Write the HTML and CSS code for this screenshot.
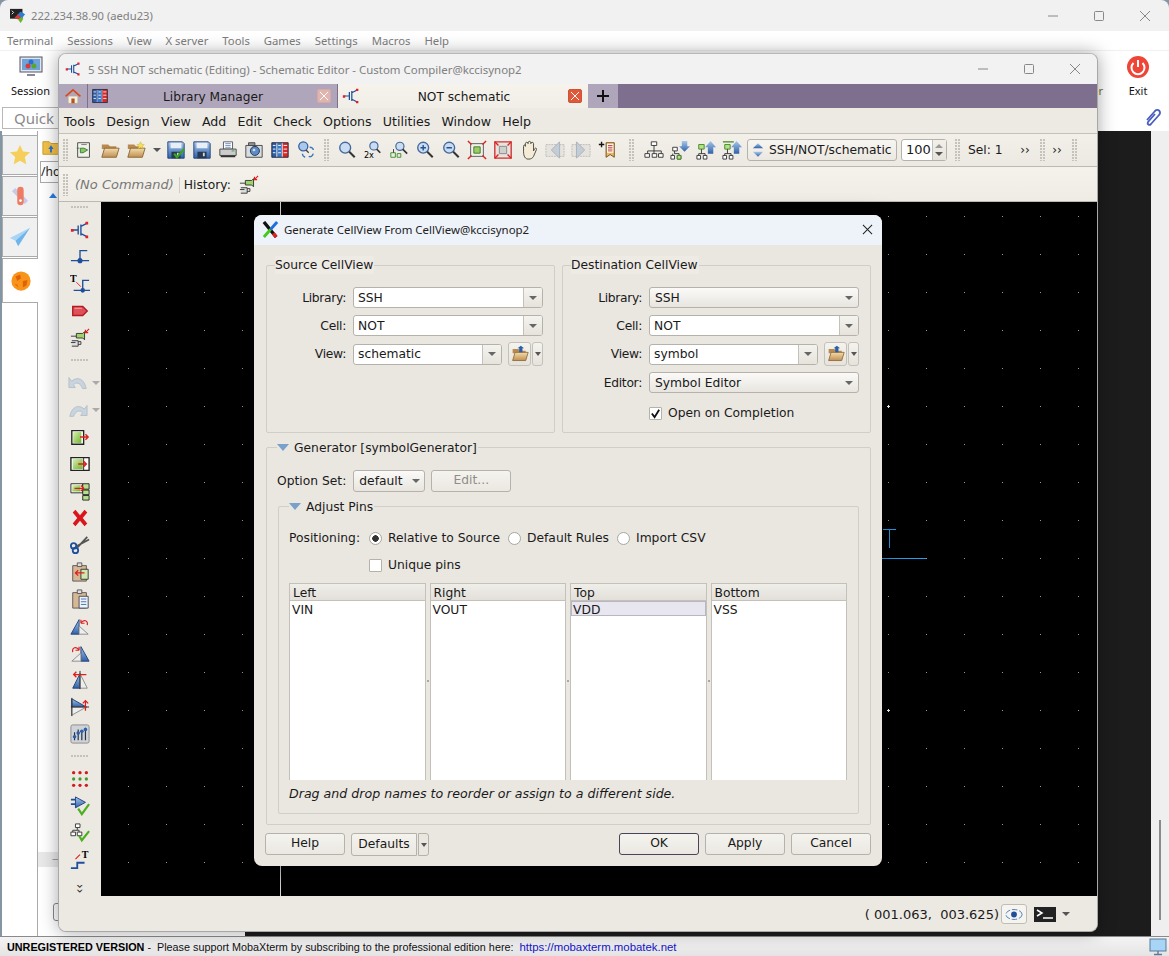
FILE: index.html
```html
<!DOCTYPE html>
<html>
<head>
  <title>MobaXterm - Generate CellView</title>
  <link rel="stylesheet" href="styles.css">
</head>
<body>

<svg class="sprite" xmlns="http://www.w3.org/2000/svg">
  <defs>
    <linearGradient id="gfold" x1="0" y1="0" x2="0" y2="1"><stop offset="0" stop-color="#f3dcae"/><stop offset="1" stop-color="#c08f52"/></linearGradient>
    <linearGradient id="gblue" x1="0" y1="0" x2="0" y2="1"><stop offset="0" stop-color="#a9c8ec"/><stop offset="1" stop-color="#2f62a8"/></linearGradient>
    <linearGradient id="ggrn" x1="0" y1="0" x2="1" y2="1"><stop offset="0" stop-color="#d8efb0"/><stop offset="1" stop-color="#6fb52c"/></linearGradient>
  </defs>
  <symbol id="fet" viewBox="0 0 22 22"><path d="M3 11h6M9 6v10M12 5v12M12 7l6-3M12 15l6 3" fill="none" stroke="#1f4f9c" stroke-width="1.5"/><path d="M1 10h3v3H1zM17 2h3v3h-3zM17 17h3v3h-3z" fill="#e0202a"/></symbol>
  <symbol id="home" viewBox="0 0 22 22"><path d="M5 11h12v9H5z" fill="#f4efe4" stroke="#b9a88f"/><path d="M9 14h4v6H9z" fill="#b4561c"/><path d="M1 11 11 2l10 9-2 1-8-7-8 7z" fill="#d8491c"/></symbol>
  <symbol id="lib" viewBox="0 0 22 22"><path d="M2 3h5v16H2z" fill="#2c5fa8"/><path d="M8 3h5v16H8z" fill="#3c78c4"/><path d="M14 3h6v16h-6z" fill="#d72b2b"/><path d="M3 6h3M3 10h3M3 14h3M9 6h3M9 10h3M9 14h3M15 6h4M15 10h4M15 14h4" stroke="#fff"/><path d="M2 3h18v16H2z" fill="none" stroke="#223"/></symbol>
  <symbol id="newcell" viewBox="0 0 22 22"><path d="M4 3h13v16H4z" fill="#f2f2ea" stroke="#444"/><path d="M3 9h3M15 11l-5 3H7V9h4z" fill="#8ccb4e" stroke="#375"/><path d="M8 5h6" stroke="#777"/></symbol>
  <symbol id="fold" viewBox="0 0 22 22"><path d="M2 5h7l2 2h7v3H2z" fill="#b98a50"/><path d="M2 19 5 9h16l-3 10z" fill="url(#gfold)" stroke="#8a6430"/></symbol>
  <symbol id="foldstar" viewBox="0 0 22 22"><use href="#fold"/><path d="m16 2 1.2 2.6 2.8.3-2 2 .5 2.8-2.5-1.4-2.5 1.4.5-2.8-2-2 2.800-.3z" fill="#f5df60" stroke="#c9a820" stroke-width=".5"/></symbol>
  <symbol id="foldup" viewBox="0 0 22 22"><use href="#fold"/><path d="M10 9V4h-2l4-3 4 3h-2v5z" fill="#2c5fa8"/></symbol>
  <symbol id="save" viewBox="0 0 22 22"><path d="M2 2h16l2 2v16H2z" fill="url(#gblue)" stroke="#1e3d78"/><path d="M5 3h12v6H5z" fill="#e9eff7"/><path d="M6 13h10v7H6z" fill="#28384f"/><path d="M12 14h2v4h-2z" fill="#cfd8e6"/></symbol>
  <symbol id="savechk" viewBox="0 0 22 22"><use href="#save"/><path d="m9 15 3 4 8-9" fill="none" stroke="#3aa51c" stroke-width="2.400"/></symbol>
  <symbol id="print" viewBox="0 0 22 22"><path d="M6 2h10v8H6z" fill="#fff" stroke="#556"/><path d="M8 4h6M8 6h6M8 8h6" stroke="#6b8fc0"/><path d="M2 10h18v7H2z" fill="#ccc" stroke="#444"/><path d="M3 17h16v2H3z" fill="#333"/><path d="M15 12h3" stroke="#3a3"/></symbol>
  <symbol id="cam" viewBox="0 0 22 22"><path d="M2 6h18v13H2z" fill="#d8dde2" stroke="#444"/><path d="M5 3h7v3H5z" fill="#999" stroke="#444"/><circle cx="12" cy="12" r="5" fill="#5c8bc5" stroke="#234"/><circle cx="11" cy="11" r="1.500" fill="#cfe0f5"/></symbol>
  <symbol id="treefind" viewBox="0 0 22 22"><circle cx="8" cy="7" r="5" fill="#a9c8ec" stroke="#34619f" stroke-width="1.400"/><path d="m11 11 3 3" stroke="#444" stroke-width="1.500"/><path d="M15 8c3 0 4 2 4 3M19 15c-1 3-3 4-5 3M7 15c0 2 1 3 3 4" fill="none" stroke="#3e78bd" stroke-width="1.600"/></symbol>
  <symbol id="mag" viewBox="0 0 22 22"><circle cx="9" cy="8.500" r="6" fill="#c9dcf2" stroke="#45699b" stroke-width="1.500"/><path d="m13.500 13 6 6" stroke="#333" stroke-width="2.200"/></symbol>
  <symbol id="magsm" viewBox="0 0 22 22"><circle cx="12" cy="6.500" r="4.500" fill="#c9dcf2" stroke="#45699b" stroke-width="1.300"/><path d="m15 10 4 4" stroke="#333" stroke-width="1.800"/></symbol>
  <symbol id="magnet" viewBox="0 0 22 22"><circle cx="12" cy="7" r="4.500" fill="#c9dcf2" stroke="#45699b" stroke-width="1.300"/><path d="m15 10 5 5" stroke="#333" stroke-width="1.800"/><path d="M2 14h5v5H2zM9 15h4v4H9z" fill="none" stroke="#3a8a2a"/><path d="M5 10v4" stroke="#333"/></symbol>
  <symbol id="magp" viewBox="0 0 22 22"><use href="#mag"/><path d="M6 8.500h6M9 5.500v6" stroke="#23508f" stroke-width="1.500"/></symbol>
  <symbol id="magm" viewBox="0 0 22 22"><use href="#mag"/><path d="M6 8.500h6" stroke="#23508f" stroke-width="1.500"/></symbol>
  <symbol id="fit" viewBox="0 0 22 22"><path d="M4 4h14v14H4z" fill="#f3f0ea" stroke="#555"/><path d="M7.500 7.500h7v7h-7z" fill="#9ccc68" stroke="#3b7a26"/><path d="M1 1l4 4M21 1l-4 4M1 21l4-4M21 21l-4-4" stroke="#e01e1e" stroke-width="1.500"/></symbol>
  <symbol id="fit2" viewBox="0 0 22 22"><path d="M2 2h18v18H2z" fill="#e6e3dd" stroke="#d03030" stroke-width="1.500"/><path d="M7 7h8v8H7z" fill="#cfcfcf" stroke="#888"/><path d="M2 2l4 4M20 2l-4 4M2 20l4-4M20 20l-4-4" stroke="#e01e1e" stroke-width="1.500"/></symbol>
  <symbol id="hand" viewBox="0 0 22 22"><path d="M5 13V7c0-2 2-2 2 0V4c0-2 3-2 3 0v-1c0-2 3-2 3 0v1c0-2 3-2 3 0v8l1-2c1-2 3-1 2 1l-3 7c-1 2-3 3-5 3H10c-3 0-5-3-5-8z" fill="#f3ead8" stroke="#443"/></symbol>
  <symbol id="prev" viewBox="0 0 22 22"><path d="M1 5h20v13H1z" fill="#e6e3dd" stroke="#bbb" stroke-dasharray="2 1"/><path d="M16 2v18L7 11z" fill="#c3cdd8" stroke="#a8b0b8"/></symbol>
  <symbol id="next" viewBox="0 0 22 22"><path d="M1 5h20v13H1z" fill="#e6e3dd" stroke="#bbb" stroke-dasharray="2 1"/><path d="M6 2v18l9-9z" fill="#c3cdd8" stroke="#a8b0b8"/></symbol>
  <symbol id="mark" viewBox="0 0 22 22"><path d="M10 3h9v16l-4.500-3-4.500 3z" fill="#f0b85a" stroke="#6a4a1a"/><path d="M11 4h7v10h-7z" fill="#fff"/><path d="M12 6h5M12 8h5M12 10h5M12 12h5" stroke="#c03030"/><path d="M2 5h6M5 2v6" stroke="#111" stroke-width="1.500"/></symbol>
  <symbol id="tree" viewBox="0 0 22 22"><path d="M8 2h6v4H8zM1 15h5v4H1zM9 15h5v4H9zM16 15h5v4h-5z" fill="#fff" stroke="#333"/><path d="M11 6v4M4 15v-3h15v3M11 10v5" fill="none" stroke="#333"/></symbol>
  <symbol id="treedn" viewBox="0 0 22 22"><path d="M3 8h5v4H3zM1 17h4v4H1zM8 17h4v4H8z" fill="#fff" stroke="#333"/><path d="M5 12v3h5v2M3 15v2" fill="none" stroke="#333"/><path d="M8 17h4v4H8z" fill="#b7e08a" stroke="#3f8a20"/><path d="M13 1h6v6h3l-6 6-6-6h3z" fill="url(#gblue)"/></symbol>
  <symbol id="treeup" viewBox="0 0 22 22"><path d="M3 5h6v5H3z" fill="#b7e08a" stroke="#3f8a20"/><path d="M1 17h4v4H1zM8 17h4v4H8z" fill="#fff" stroke="#333"/><path d="M6 10v5M3 15h7v2M3 15v2" fill="none" stroke="#333"/><path d="M16 1l6 7h-3v7h-6V8h-3z" fill="url(#gblue)"/></symbol>
  <symbol id="treetop" viewBox="0 0 22 22"><path d="M1 2h12" stroke="#3f8a20" stroke-width="1.500"/><use href="#treeup"/></symbol>
  <symbol id="plug" viewBox="0 0 22 22"><path d="M7 6h7l2-2v9l-2-2H7z" fill="#9fd46a" stroke="#333"/><path d="M2 14h7v6H2" fill="#ddd" stroke="#333"/><path d="M9 15l3 0v3H9M1 9h6M6 16h-5" fill="none" stroke="#333"/><path d="M21 1l-4 4M17 2v3h3" fill="none" stroke="#e01e1e" stroke-width="1.300"/></symbol>
  <symbol id="wire" viewBox="0 0 22 22"><path d="M1 15h20M11 15V4h8" fill="none" stroke="#1f4f9c" stroke-width="1.500"/><circle cx="11" cy="15" r="2.800" fill="#1f4f9c"/></symbol>
  <symbol id="wirearm" viewBox="0 0 22 22"><path d="M4 18h18M14 18V7h7" fill="none" stroke="#1f4f9c" stroke-width="1.500"/><circle cx="14" cy="18" r="2.500" fill="#1f4f9c"/><path d="m7 9 5 5" stroke="#e01e1e"/></symbol>
  <symbol id="pin" viewBox="0 0 22 22"><path d="M3 6h11l5 5-5 5H3z" fill="#e0505a" stroke="#b01a20" stroke-width="1.500"/><path d="M5 8h8" stroke="#f3b0b0"/></symbol>
  <symbol id="undo" viewBox="0 0 22 22"><path d="M1 5v11h7l-2-3c3-3 7-3 10 4h4c-2-10-9-14-16-8z" fill="#c8d4de" stroke="#b5bec7"/></symbol>
  <symbol id="redo" viewBox="0 0 22 22"><path d="M21 6v11h-7l2-3c-3-3-7-3-10 4H2c2-10 9-14 16-8z" fill="#c8d4de" stroke="#b5bec7"/></symbol>
  <symbol id="move" viewBox="0 0 22 22"><path d="M2 4h13v15H2z" fill="#fff" stroke="#222" stroke-width="1.500"/><path d="M3.500 5.500h9v12h-9z" fill="url(#ggrn)"/><path d="M11 11h9M17 8l3 3-3 3" fill="none" stroke="#e01e1e" stroke-width="1.500"/></symbol>
  <symbol id="stretch" viewBox="0 0 22 22"><path d="M1 4h20v14H1z" fill="#fff" stroke="#222" stroke-width="1.500"/><path d="M3 5.500h11v11H3z" fill="url(#ggrn)"/><path d="M15 4v14" stroke="#222"/><path d="M9 11h9M15 8l3 3-3 3" fill="none" stroke="#e01e1e" stroke-width="1.500"/></symbol>
  <symbol id="copy" viewBox="0 0 22 22"><path d="M1 3h13v10H1z" fill="#fff" stroke="#222"/><path d="M2.500 4.500h9v7h-9z" fill="url(#ggrn)"/><path d="M14 3h7v6h-7zM14 10h7v5h-7zM14 16h7v5h-7z" fill="#b7e08a" stroke="#222"/><path d="M5 8h10M12 5l3 3-3 3" fill="none" stroke="#e01e1e" stroke-width="1.400"/></symbol>
  <symbol id="del" viewBox="0 0 22 22"><path d="M3 5l3-3 5 6 5-6 3 3-5 6 5 6-3 3-5-6-5 6-3-3 5-6z" fill="#d9161c"/></symbol>
  <symbol id="sciss" viewBox="0 0 22 22"><path d="M19 2 8 14M21 5 6 13" stroke="#555" stroke-width="2"/><circle cx="6" cy="17" r="3" fill="none" stroke="#1f4f9c" stroke-width="2"/><circle cx="4" cy="12" r="3" fill="none" stroke="#1f4f9c" stroke-width="2"/></symbol>
  <symbol id="pastem" viewBox="0 0 22 22"><path d="M3 4h15v17H3z" fill="#d8b894" stroke="#555"/><path d="M8 1h5v4H8z" fill="#ddd" stroke="#555"/><path d="M12 8h8v11h-8z" fill="#cfe8b0" stroke="#333"/><path d="M6 12h10M9 9l-3 3 3 3" fill="none" stroke="#e01e1e" stroke-width="1.400"/></symbol>
  <symbol id="paste" viewBox="0 0 22 22"><path d="M3 4h15v17H3z" fill="#d8b894" stroke="#555"/><path d="M8 1h5v4H8z" fill="#ddd" stroke="#555"/><path d="M10 8h10v13H10z" fill="#eef3fa" stroke="#445"/><path d="M12 11h6M12 14h6M12 17h6" stroke="#3e6fb5"/></symbol>
  <symbol id="rotl" viewBox="0 0 22 22"><path d="M10 4v16H1z" fill="url(#gblue)" stroke="#1e3d78"/><path d="M10 11l10 9H10z" fill="#eee" stroke="#888"/><path d="M12 8c3-5 8-3 7 2M12 8V4M12 8h4" fill="none" stroke="#d92020" stroke-width="1.300"/></symbol>
  <symbol id="rotr" viewBox="0 0 22 22"><path d="M12 4v16h9z" fill="url(#gblue)" stroke="#1e3d78"/><path d="M12 11 2 20h10z" fill="#eee" stroke="#888"/><path d="M10 8C7 3 2 5 3 10M10 8V4M10 8H6" fill="none" stroke="#d92020" stroke-width="1.300"/></symbol>
  <symbol id="flipv" viewBox="0 0 22 22"><path d="M11 4v16H3z" fill="url(#gblue)" stroke="#1e3d78"/><path d="M11 4v16h8z" fill="#eee" stroke="#888"/><path d="M11 1v20" stroke="#222"/><path d="M4 5h14M7 2 4 5l3 3" fill="none" stroke="#e01e1e" stroke-width="1.400"/></symbol>
  <symbol id="fliph" viewBox="0 0 22 22"><path d="M2 2v9h16z" fill="url(#gblue)" stroke="#1e3d78"/><path d="M2 20v-9h16z" fill="#eee" stroke="#888"/><path d="M1 11h20M2 1v20" stroke="#222"/><path d="M17 4v11M14 7l3-3 3 3" fill="none" stroke="#e01e1e" stroke-width="1.400"/></symbol>
  <symbol id="mixer" viewBox="0 0 22 22"><rect x="1" y="1" width="20" height="20" rx="2" fill="#cfd3d8" stroke="#888"/><path d="M5 18V9M9 18V6M13 18V9M17 18V4" stroke="#234" stroke-width="1.300"/><circle cx="5" cy="14" r="2" fill="#2c5fa8"/><circle cx="9" cy="10" r="2" fill="#2c5fa8"/><circle cx="13" cy="8" r="2" fill="#2c5fa8"/><circle cx="17" cy="6" r="2" fill="#2c5fa8"/></symbol>
  <symbol id="dots" viewBox="0 0 22 22"><g fill="#d01c1c"><circle cx="4" cy="4" r="1.800"/><circle cx="18" cy="4" r="1.800"/><circle cx="4" cy="18" r="1.800"/><circle cx="11" cy="18" r="1.800"/><circle cx="18" cy="18" r="1.800"/><circle cx="11" cy="4" r="1.800"/></g><g fill="#4c9a2a"><circle cx="4" cy="11" r="1.800"/><circle cx="11" cy="11" r="1.800"/><circle cx="18" cy="11" r="1.800"/></g></symbol>
  <symbol id="plugchk" viewBox="0 0 22 22"><path d="M1 4h5M1 9h5" stroke="#1f4f9c" stroke-width="2"/><path d="M6 1v12l11-6z" fill="url(#gblue)" stroke="#1e3d78"/><path d="m9 14 4 6 8-11" fill="none" stroke="#4cb020" stroke-width="2.400"/></symbol>
  <symbol id="treechk" viewBox="0 0 22 22"><path d="M6 1h5v4H6zM1 10h5v4H1zM8 10h5v4H8z" fill="#fff" stroke="#333"/><path d="M8 5v3H3v2M8 8h2v2" fill="none" stroke="#333"/><path d="m10 14 3 5 8-10" fill="none" stroke="#4cb020" stroke-width="2.400"/></symbol>
  <symbol id="stairline" viewBox="0 0 22 22"><path d="M1 20h7v-6h8" fill="none" stroke="#1f4f9c" stroke-width="2"/><path d="M6 10l5-5" stroke="#e01e1e" stroke-width="1.300"/></symbol>
</svg>

<div class="moba">
  <div class="moba-title">
    <svg class="moba-logo" viewBox="0 0 18 18"><rect x="0" y="1" width="14" height="11" fill="#222"/><path d="M2 3l2 2-2 2" stroke="#fff" fill="none"/><path d="M8 8l4-4 5 3-4 5z" fill="#2c7dd0"/><path d="M5 11l4-4 3 3-3 3z" fill="#d73a3a"/><path d="M9 13l4-3 2 2-3 5z" fill="#6ab52c"/></svg>
    <span class="moba-title-text">222.234.38.90 (aedu23)</span>
    <div class="win-btns moba-btns">
      <svg viewBox="0 0 12 12"><path d="M1 6h10" stroke="#888"/></svg>
      <svg viewBox="0 0 12 12"><rect x="1.500" y="1.500" width="9" height="9" rx="1" fill="none" stroke="#888"/></svg>
      <svg viewBox="0 0 12 12"><path d="M1 1l10 10M11 1 1 11" stroke="#888"/></svg>
    </div>
  </div>
  <div class="moba-menu">
    <span>Terminal</span><span>Sessions</span><span>View</span><span>X server</span><span>Tools</span><span>Games</span><span>Settings</span><span>Macros</span><span>Help</span>
  </div>
  <div class="ribbon">
    <div class="rib-item">
      <svg class="rib-icon" viewBox="0 0 24 24"><rect x="1" y="2" width="22" height="15" fill="#dfe8f2" stroke="#556"/><rect x="3" y="4" width="18" height="11" fill="#6fa3d8"/><path d="M8 19h8v2H8z" fill="#889"/><circle cx="12" cy="7" r="2.500" fill="#2c6fd0"/><circle cx="9" cy="11" r="2.500" fill="#d73a3a"/><circle cx="15" cy="11" r="2.500" fill="#5aa52c"/></svg>
      <span>Session</span>
    </div>
    <div class="rib-right">
      <span class="rib-hidden">X server</span>
      <div class="rib-item">
        <svg class="rib-icon" viewBox="0 0 24 24"><circle cx="12" cy="12" r="11" fill="#ef4436"/><path d="M7.500 8a6.500 6.500 0 1 0 9 0M12 5v7" fill="none" stroke="#fff" stroke-width="2"/></svg>
        <span>Exit</span>
      </div>
    </div>
  </div>
  <div class="quick">
    <div class="quick-input">Quick</div>
    <svg class="clip" viewBox="0 0 20 20"><path d="M4 12 12 3c3-3 7 1 4 4l-8 9c-2 2-4 0-3-2l7-8" fill="none" stroke="#4a5ec0" stroke-width="1.800"/></svg>
  </div>
  <div class="moba-main">
    <div class="side-tabs">
      <div class="side-tab"><svg viewBox="0 0 24 24"><path d="m12 1 3.300 7.200 7.700.9-5.700 5.200 1.500 7.700L12 18.200 5.200 22l1.500-7.700L1 9.100l7.700-.9z" fill="#f6cf5a"/></svg></div>
      <div class="side-tab"><svg viewBox="0 0 24 24"><path d="M5 5l14 14" stroke="#c7c9e8" stroke-width="5"/><rect x="9" y="2" width="7" height="20" rx="3.500" fill="#ee7b63"/><circle cx="12.500" cy="17" r="1.500" fill="#fff"/></svg></div>
      <div class="side-tab"><svg viewBox="0 0 24 24"><path d="M23 2 1 13l6 3z" fill="#a8d4f5"/><path d="M23 2 7 16l3 6z" fill="#6fb4ea"/></svg></div>
      <div class="side-tab side-tab-on"><svg viewBox="0 0 24 24"><circle cx="12" cy="12" r="10.500" fill="#f8941a"/><path d="M6 7l5-2 1 4-4 3zM14 12l5-1-1 6-4 2zM5 15l3 1 1 3z" fill="#e0620a"/></svg></div>
    </div>
    <div class="side-panel">
      <svg class="side-folder" viewBox="0 0 20 20"><path d="M1 3h7l2 2h9v12H1z" fill="#f2c14a" stroke="#c99a20"/><path d="M10 7 7 11h2v4h2v-4h2z" fill="#2c6fd0"/></svg>
      <div class="side-path">/hom</div>
      <div class="side-up"></div>
      <div class="side-row"><span>&mdash;</span></div>
      <div class="side-box"></div>
    </div>
    <div class="terminal"></div>
    <div class="scrollbar"><div class="thumb"></div></div>
  </div>
  <div class="status">
    <b>UNREGISTERED VERSION</b><span class="status-msg">-&nbsp; Please support MobaXterm by subscribing to the professional edition here:</span><span class="status-link">https://mobaxterm.mobatek.net</span>
    <svg class="status-mon" viewBox="0 0 18 18"><rect x="1" y="1" width="16" height="12" fill="#a8d4f5" stroke="#5a7a9a"/><path d="M9 13v3M5 16.500h8" stroke="#5a7a9a" stroke-width="1.400"/></svg>
  </div>
</div>

<div class="editor">
  <div class="ed-title">
    <svg class="ic14"><use href="#fet"/></svg>
    <span class="ed-title-text">5 SSH NOT schematic (Editing) - Schematic Editor - Custom Compiler@kccisynop2</span>
    <div class="win-btns ed-btns">
      <svg viewBox="0 0 12 12"><path d="M1 6h10" stroke="#888"/></svg>
      <svg viewBox="0 0 12 12"><rect x="1.500" y="1.500" width="9" height="9" rx="1" fill="none" stroke="#888"/></svg>
      <svg viewBox="0 0 12 12"><path d="M1 1l10 10M11 1 1 11" stroke="#888"/></svg>
    </div>
  </div>
  <div class="tabs">
    <div class="tab tab-home"><svg class="ic16"><use href="#home"/></svg></div>
    <div class="tab tab-lib">
      <svg class="ic16"><use href="#lib"/></svg>
      <span class="tab-name">Library Manager</span>
      <span class="tab-x tab-x-off"></span>
    </div>
    <div class="tab tab-on">
      <svg class="ic16"><use href="#fet"/></svg>
      <span class="tab-name">NOT schematic</span>
      <span class="tab-x"></span>
    </div>
    <div class="tab tab-plus"><svg viewBox="0 0 12 12"><path d="M6 0v12M0 6h12" stroke="#111" stroke-width="2"/></svg></div>
  </div>
  <div class="ed-menu">
    <span>Tools</span><span>Design</span><span>View</span><span>Add</span><span>Edit</span><span>Check</span><span>Options</span><span>Utilities</span><span>Window</span><span>Help</span>
  </div>
  <div class="toolbar">
    <i class="grip grip-a"></i>
    <span class="tb"><svg class="ic"><use href="#newcell"/></svg></span>
    <span class="tb"><svg class="ic"><use href="#fold"/></svg></span>
    <span class="tb"><svg class="ic"><use href="#foldstar"/></svg></span>
    <span class="tb-drop"></span>
    <span class="tb"><svg class="ic"><use href="#savechk"/></svg></span>
    <span class="tb"><svg class="ic"><use href="#save"/></svg></span>
    <span class="tb"><svg class="ic"><use href="#print"/></svg></span>
    <span class="tb"><svg class="ic"><use href="#cam"/></svg></span>
    <span class="tb"><svg class="ic"><use href="#lib"/></svg></span>
    <span class="tb"><svg class="ic"><use href="#treefind"/></svg></span>
    <i class="grip grip-b"></i>
    <span class="tb"><svg class="ic"><use href="#mag"/></svg></span>
    <span class="tb"><svg class="ic" viewBox="0 0 22 22"><use href="#magsm"/><text x="1" y="20" class="ic-text">2x</text></svg></span>
    <span class="tb"><svg class="ic"><use href="#magnet"/></svg></span>
    <span class="tb"><svg class="ic"><use href="#magp"/></svg></span>
    <span class="tb"><svg class="ic"><use href="#magm"/></svg></span>
    <span class="tb"><svg class="ic"><use href="#fit"/></svg></span>
    <span class="tb"><svg class="ic"><use href="#fit2"/></svg></span>
    <span class="tb"><svg class="ic"><use href="#hand"/></svg></span>
    <span class="tb"><svg class="ic"><use href="#prev"/></svg></span>
    <span class="tb"><svg class="ic"><use href="#next"/></svg></span>
    <span class="tb"><svg class="ic"><use href="#mark"/></svg></span>
    <i class="grip grip-c"></i>
    <span class="tb"><svg class="ic"><use href="#tree"/></svg></span>
    <span class="tb"><svg class="ic"><use href="#treedn"/></svg></span>
    <span class="tb"><svg class="ic"><use href="#treeup"/></svg></span>
    <span class="tb"><svg class="ic"><use href="#treetop"/></svg></span>
    <div class="cv-combo">
      <svg viewBox="0 0 14 18"><path d="M7 1l6 6H1z" fill="url(#gblue)"/><path d="M7 17l6-6H1z" fill="url(#gblue)"/></svg>
      <span>SSH/NOT/schematic</span>
    </div>
    <div class="spin"><span class="spin-val">100</span><span class="spin-arrows"></span></div>
    <i class="grip grip-d"></i>
    <span class="sel">Sel: 1</span>
    <span class="more more-a">&rsaquo;&rsaquo;</span>
    <i class="grip grip-e"></i>
    <span class="more more-b">&rsaquo;&rsaquo;</span>
    <i class="grip grip-e"></i>
  </div>
  <div class="cmdbar">
    <i class="grip grip-a"></i>
    <span class="no-cmd">(No Command)</span>
    <span class="hist">History:</span>
    <svg class="ic hist-ic"><use href="#plug"/></svg>
  </div>
  <div class="work">
    <div class="lefttools">
      <i class="hgrip"></i>
      <span class="lt"><svg class="ic"><use href="#fet"/></svg></span>
      <span class="lt"><svg class="ic"><use href="#wire"/></svg></span>
      <span class="lt"><svg class="ic" viewBox="0 0 22 22"><use href="#wirearm"/><text x="0" y="9" class="ic-t">T</text></svg></span>
      <span class="lt"><svg class="ic"><use href="#pin"/></svg></span>
      <span class="lt"><svg class="ic"><use href="#plug"/></svg></span>
      <i class="hgrip hgrip-mid"></i>
      <span class="lt lt-drop"><svg class="ic"><use href="#undo"/></svg><em></em></span>
      <span class="lt lt-drop"><svg class="ic"><use href="#redo"/></svg><em></em></span>
      <span class="lt"><svg class="ic"><use href="#move"/></svg></span>
      <span class="lt"><svg class="ic"><use href="#stretch"/></svg></span>
      <span class="lt"><svg class="ic"><use href="#copy"/></svg></span>
      <span class="lt"><svg class="ic"><use href="#del"/></svg></span>
      <span class="lt"><svg class="ic"><use href="#sciss"/></svg></span>
      <span class="lt"><svg class="ic"><use href="#pastem"/></svg></span>
      <span class="lt"><svg class="ic"><use href="#paste"/></svg></span>
      <span class="lt"><svg class="ic"><use href="#rotl"/></svg></span>
      <span class="lt"><svg class="ic"><use href="#rotr"/></svg></span>
      <span class="lt"><svg class="ic"><use href="#flipv"/></svg></span>
      <span class="lt"><svg class="ic"><use href="#fliph"/></svg></span>
      <span class="lt"><svg class="ic"><use href="#mixer"/></svg></span>
      <i class="hgrip hgrip-mid"></i>
      <span class="lt"><svg class="ic"><use href="#dots"/></svg></span>
      <span class="lt"><svg class="ic"><use href="#plugchk"/></svg></span>
      <span class="lt"><svg class="ic"><use href="#treechk"/></svg></span>
      <span class="lt"><svg class="ic" viewBox="0 0 22 22"><use href="#stairline"/><text x="13" y="9" class="ic-t">T</text></svg></span>
      <span class="lt lt-more">&rsaquo;&rsaquo;</span>
    </div>
    <div class="canvas">
      <div class="axis"></div>
      <div class="cross cross-a"></div>
      <div class="cross cross-b"></div>
      <div class="pin-t"></div>
      <div class="pin-v"></div>
      <div class="pin-h"></div>
    </div>
  </div>
  <div class="ed-status">
    <span class="coords">( 001.063,&nbsp; 003.625)</span>
    <span class="eye"><svg viewBox="0 0 20 14"><ellipse cx="10" cy="7" rx="9" ry="5.500" fill="none" stroke="#3e78bd" stroke-dasharray="6 2"/><circle cx="10" cy="7" r="3.200" fill="#1f4f9c"/></svg></span>
    <svg class="term-ic" viewBox="0 0 22 15"><rect width="22" height="15" fill="#222"/><path d="M3 3l5 3-5 3" fill="none" stroke="#fff" stroke-width="1.500"/><path d="M9 11h10" stroke="#fff" stroke-width="1.500"/></svg>
    <span class="st-drop"></span>
  </div>
</div>

<div class="dialog">
  <div class="dlg-title">
    <svg class="x-logo" viewBox="0 0 18 18"><path d="M2 1l13 16" stroke="#111" stroke-width="3.500"/><path d="M16 1 9 9" stroke="#1c6fe0" stroke-width="3"/><path d="M2 17l7-8" stroke="#43c81e" stroke-width="3"/><path d="M12 13l3 4" stroke="#e02020" stroke-width="3.500"/></svg>
    <span class="dlg-title-text">Generate CellView From CellView@kccisynop2</span>
    <svg class="dlg-close" viewBox="0 0 12 12"><path d="M1 1l10 10M11 1 1 11" stroke="#222" stroke-width="1.100"/></svg>
  </div>
  <div class="dlg-body">
    <div class="cv-row">
      <div class="group cv-source">
        <div class="legend">Source CellView</div>
        <div class="form">
          <label>Library:</label><div class="combo"><span class="cb-text">SSH</span><span class="cb-arrow"></span></div>
          <label>Cell:</label><div class="combo"><span class="cb-text">NOT</span><span class="cb-arrow"></span></div>
          <label>View:</label>
          <div class="combo-pair">
            <div class="combo"><span class="cb-text">schematic</span><span class="cb-arrow"></span></div>
            <span class="fold-btn"><svg class="ic18"><use href="#foldup"/></svg></span><span class="fold-drop"></span>
          </div>
        </div>
      </div>
      <div class="group cv-dest">
        <div class="legend">Destination CellView</div>
        <div class="form">
          <label>Library:</label><div class="combo combo-ro"><span class="cb-text">SSH</span><span class="cb-arrow"></span></div>
          <label>Cell:</label><div class="combo"><span class="cb-text">NOT</span><span class="cb-arrow"></span></div>
          <label>View:</label>
          <div class="combo-pair">
            <div class="combo"><span class="cb-text">symbol</span><span class="cb-arrow"></span></div>
            <span class="fold-btn"><svg class="ic18"><use href="#foldup"/></svg></span><span class="fold-drop"></span>
          </div>
          <label>Editor:</label><div class="combo combo-ro"><span class="cb-text">Symbol Editor</span><span class="cb-arrow"></span></div>
          <span></span>
          <div class="check-row"><span class="check check-on"><svg viewBox="0 0 12 12"><path d="M2 6l3 4 5-8" fill="none" stroke="#111" stroke-width="2"/></svg></span>Open on Completion</div>
        </div>
      </div>
    </div>

    <div class="group generator">
      <div class="legend legend-tri"><i class="tri"></i>Generator [symbolGenerator]</div>
      <div class="option-row">
        <span class="option-label">Option Set:</span>
        <div class="combo combo-ro option-combo"><span class="cb-text">default</span><span class="cb-arrow"></span></div>
        <span class="btn btn-off">Edit...</span>
      </div>
      <div class="group adjust">
        <div class="legend legend-tri"><i class="tri"></i>Adjust Pins</div>
        <div class="pos-row">
          <span class="pos-label">Positioning:</span>
          <span class="radio radio-on"></span><span class="pos-opt">Relative to Source</span>
          <span class="radio"></span><span class="pos-opt">Default Rules</span>
          <span class="radio"></span><span>Import CSV</span>
        </div>
        <div class="uniq-row"><span class="check"></span>Unique pins</div>
        <div class="pin-cols">
          <div class="pin-col"><div class="pin-head">Left</div><div class="pin-list"><div class="pin-item">VIN</div></div></div>
          <i class="split"></i>
          <div class="pin-col"><div class="pin-head">Right</div><div class="pin-list"><div class="pin-item">VOUT</div></div></div>
          <i class="split"></i>
          <div class="pin-col"><div class="pin-head">Top</div><div class="pin-list"><div class="pin-item pin-sel">VDD</div></div></div>
          <i class="split"></i>
          <div class="pin-col"><div class="pin-head">Bottom</div><div class="pin-list"><div class="pin-item">VSS</div></div></div>
        </div>
        <div class="hint">Drag and drop names to reorder or assign to a different side.</div>
      </div>
    </div>

    <div class="btn-row">
      <span class="btn">Help</span>
      <span class="btn btn-def">Defaults</span><span class="btn-defdrop"></span>
      <span class="btn-gap"></span>
      <span class="btn btn-ok">OK</span>
      <span class="btn">Apply</span>
      <span class="btn">Cancel</span>
    </div>
  </div>
</div>

</body>
</html>
```

FILE: styles.css
```css
html, body{
margin: 0;
padding: 0;
width: 1169px;
height: 956px;
overflow: hidden;
background-color: #8496a4;
font-family: "DejaVu Sans", sans-serif;
font-size: 12.3px;
color: #1a1a1a;
}
.sprite{
position: absolute;
width: 0;
height: 0;
}
.ic{ width: 20px; height: 20px; }
.ic18{ width: 18px; height: 18px; }
.ic16{ width: 18px; height: 18px; }
.ic14{ width: 16px; height: 16px; }
.ic-text{
font-size: 9px;
font-family: "DejaVu Sans", sans-serif;
}
.ic-t{
font-size: 11px;
font-weight: bold;
font-family: "Liberation Serif", serif;
}

/* mobaxterm window */
.moba{
position: absolute;
left: 0;
top: 0;
width: 1169px;
height: 956px;
display: flex;
flex-direction: column;
font-family: "Noto Sans", sans-serif;
}
.moba-title{
height: 31px;
background-color: #f1f1f1;
border-radius: 8px 8px 0 0;
display: flex;
align-items: center;
padding-left: 10px;
box-sizing: border-box;
}
.moba-logo{ width: 16px; height: 16px; }
.moba-title-text{
margin-left: 5px;
font-size: 11.2px;
color: #808080;
}
.win-btns{
margin-left: auto;
display: flex;
align-items: center;
}
.win-btns svg{ width: 12px; height: 12px; }
.moba-btns{ padding-right: 18px; gap: 34px; }
.moba-menu{
height: 19px;
background-color: #fff;
display: flex;
gap: 14px;
padding-left: 7px;
font-size: 11.3px;
line-height: 19px;
color: #7d7d7d;
}
.ribbon{
height: 55px;
background-color: #fff;
display: flex;
justify-content: space-between;
padding: 0 19px 0 11px;
border-top: 1px solid #f0f0f0;
box-sizing: border-box;
}
.rib-item{
display: flex;
flex-direction: column;
align-items: center;
font-size: 11px;
color: #111;
padding-top: 4px;
gap: 4px;
}
.rib-icon{ width: 24px; height: 24px; }
.rib-right{
display: flex;
align-items: flex-start;
gap: 23px;
}
.rib-hidden{
margin-top: 32px;
font-size: 11px;
color: #7a6a10;
}
.quick{
height: 26px;
background-color: #fff;
display: flex;
justify-content: space-between;
align-items: center;
padding: 0 6px 0 2px;
}
.quick-input{
width: 220px;
height: 22px;
border: 1px solid #b8b8b8;
padding-left: 11px;
box-sizing: border-box;
font-size: 15px;
line-height: 20px;
color: #8a8a8a;
}
.clip{ width: 20px; height: 20px; }
.moba-main{
flex: 1;
display: flex;
min-height: 0;
}
.side-tabs{
width: 36px;
margin-left: 2px;
background-color: #fff;
border-right: 1px solid #aaa;
box-sizing: border-box;
padding-top: 4px;
display: flex;
flex-direction: column;
gap: 1px;
}
.side-tab{
height: 40px;
background-color: #f0f0f0;
border: 1px solid #aaa;
border-right: 0;
display: flex;
align-items: center;
justify-content: center;
box-sizing: border-box;
}
.side-tab svg{ width: 22px; height: 22px; }
.side-tab-on{
height: 45px;
background-color: #fff;
margin-right: -1px;
}
.side-panel{
width: 207px;
background-color: #fff;
display: flex;
flex-direction: column;
padding: 8px 0 0 2px;
box-sizing: border-box;
}
.side-folder{ width: 18px; height: 18px; margin-left: 2px; }
.side-path{
margin-top: 4px;
height: 22px;
width: 100%;
border: 1px solid #aaa;
box-sizing: border-box;
font-size: 12px;
line-height: 20px;
}
.side-up{
margin: 10px 0 0 9px;
width: 0;
height: 0;
border-left: 4px solid transparent;
border-right: 4px solid transparent;
border-bottom: 5px solid #2a7de0;
}
.side-row{
margin-top: 654px;
height: 15px;
background-color: #e9e9e9;
margin-left: -2px;
line-height: 14px;
font-size: 9px;
padding-left: 14px;
color: #666;
}
.side-box{
margin: 36px 0 0 13px;
width: 20px;
height: 16px;
border: 1px solid #888;
border-radius: 3px;
}
.terminal{
flex: 1;
background-color: #1c1c1c;
}
.scrollbar{
width: 18px;
background-color: #efefef;
display: flex;
flex-direction: column;
justify-content: flex-end;
align-items: center;
padding-bottom: 16px;
box-sizing: border-box;
}
.thumb{
width: 2px;
height: 100px;
background-color: #8a8a8a;
}
.status{
height: 20px;
background: linear-gradient(to bottom, #f4f4f4, #e4e4e4);
border-top: 1px solid #8a8a8a;
box-sizing: border-box;
display: flex;
align-items: center;
padding-left: 7px;
font-family: "Liberation Sans", sans-serif;
font-size: 10.8px;
color: #111;
}
.status b{ color: #000; }
.status-msg{ margin-left: 3px; }
.status-link{ margin-left: 6px; color: #1414c8; font-size: 11.4px; }
.status-mon{ width: 18px; height: 18px; margin-left: auto; margin-right: 2px; }

/* schematic editor window */
.editor{
position: absolute;
left: 58px;
top: 53px;
width: 1040px;
height: 879px;
box-sizing: border-box;
border: 1px solid #a8a8a8;
border-top-color: #b8b8b8;
border-radius: 8px 8px 8px 8px;
background-color: #ece9e3;
box-shadow: 0 0 18px rgba(0,0,0,0.35);
display: flex;
flex-direction: column;
overflow: hidden;
}
.ed-title{
height: 30px;
flex: none;
background-color: #f2f2f2;
display: flex;
align-items: center;
padding-left: 6px;
font-family: "Noto Sans", sans-serif;
}
.ed-title-text{
margin-left: 7px;
font-size: 11.45px;
color: #808080;
}
.ed-btns{ padding-right: 16px; gap: 34px; }
.tabs{
height: 24px;
flex: none;
background-color: #7f6f8f;
display: flex;
}
.tab{
display: flex;
align-items: center;
box-sizing: border-box;
background-color: #b0a6bb;
}
.tab-home{
width: 29px;
justify-content: center;
border-right: 1px solid #7f6f8f;
}
.tab-lib{
width: 250px;
padding: 0 6px 0 3px;
border-right: 1px solid #7f6f8f;
}
.tab-on{
width: 250px;
padding: 0 6px 0 4px;
background: linear-gradient(to bottom, #f6f3ed, #f1eee7);
}
.tab-name{
flex: 1;
text-align: center;
padding-top: 2px;
font-size: 12.2px;
}
.tab-x{
width: 14px;
height: 14px;
box-sizing: border-box;
background: linear-gradient(135deg, transparent 44%, #fff 44%, #fff 56%, transparent 56%) center / 8px 8px no-repeat, linear-gradient(45deg, transparent 44%, #fff 44%, #fff 56%, transparent 56%) center / 8px 8px no-repeat, #e2573a;
border: 1px solid #c8553a;
border-radius: 2px;
}
.tab-x-off{
background: linear-gradient(135deg, transparent 44%, #fff 44%, #fff 56%, transparent 56%) center / 8px 8px no-repeat, linear-gradient(45deg, transparent 44%, #fff 44%, #fff 56%, transparent 56%) center / 8px 8px no-repeat, #e2b4ae;
border-color: #d8a8a8;
}
.tab-plus{
width: 30px;
justify-content: center;
}
.tab-plus svg{ width: 12px; height: 12px; }
.ed-menu{
height: 25px;
flex: none;
display: flex;
gap: 11.2px;
padding-left: 5px;
font-size: 12.6px;
line-height: 27px;
background-color: #edeae3;
}
.toolbar{
height: 34px;
flex: none;
box-sizing: border-box;
border-top: 1px solid #c4c1ba;
border-bottom: 1px solid #bcb9b3;
background: linear-gradient(to bottom, #f3f0ea, #ece9e3);
display: flex;
align-items: center;
padding-left: 4px;
}
.tb{
width: 26px;
height: 26px;
display: flex;
align-items: center;
justify-content: center;
flex: none;
}
.tb-drop, .st-drop{
width: 0;
height: 0;
flex: none;
margin: 0 2px 0 4px;
border-left: 4px solid transparent;
border-right: 4px solid transparent;
border-top: 4px solid #555;
}
.grip{
display: block;
flex: none;
width: 6px;
height: 22px;
background-image: radial-gradient(circle at 1px 1px, #c5c2bb 0.8px, transparent 1px);
background-size: 3px 3px;
}
.grip-a{ margin-right: 2px; }
.grip-b{ margin: 0 4px 0 5px; }
.grip-c{ margin: 0 6px 0 9px; }
.grip-d{ margin: 0 7px 0 8px; }
.grip-e{ margin: 0 0 0 7px; }
.cv-combo{
margin-left: 2px;
width: 150px;
height: 22px;
box-sizing: border-box;
border: 1px solid #b5b2ab;
border-radius: 3px;
background: linear-gradient(to bottom, #f8f6f1, #ebe8e1);
display: flex;
align-items: center;
padding-left: 4px;
gap: 5px;
white-space: nowrap;
flex: none;
}
.cv-combo svg{ width: 12px; height: 16px; flex: none; }
.spin{
margin-left: 4px;
width: 46px;
height: 22px;
box-sizing: border-box;
border: 1px solid #b5b2ab;
border-radius: 3px;
display: flex;
background-color: #fff;
flex: none;
}
.spin-val{ flex: 1; padding-left: 4px; line-height: 20px; font-size: 13px; }
.spin-arrows{
width: 13px;
border-left: 1px solid #c4c1ba;
background: linear-gradient(to bottom, #f3f0ea, #e6e3dc);
position: relative;
}
.spin-arrows::before, .spin-arrows::after{
content: "";
position: absolute;
left: 2px;
border-left: 4px solid transparent;
border-right: 4px solid transparent;
}
.spin-arrows::before{ top: 4px; border-bottom: 4px solid #999; }
.spin-arrows::after{ bottom: 4px; border-top: 4px solid #555; }
.sel{ width: 40px; flex: none; white-space: nowrap; }
.more{ width: 16px; text-align: center; font-size: 12px; flex: none; }
.more-a{ margin-left: 9px; }
.more-b{ margin-left: 3px; }
.cmdbar{
height: 35px;
flex: none;
box-sizing: border-box;
border-bottom: 1px solid #bcb9b3;
background: linear-gradient(to bottom, #f5f2ec, #efece5);
display: flex;
align-items: center;
padding: 2px 0 0 4px;
}
.no-cmd{
margin-left: 4px;
font-size: 13px;
font-style: italic;
color: #777;
padding-right: 5px;
border-right: 1px solid #d0cdc6;
line-height: 16px;
}
.hist{ margin-left: 4px; }
.hist-ic{ margin-left: 8px; }
.work{
flex: 1;
min-height: 0;
display: flex;
}
.lefttools{
width: 42px;
flex: none;
display: flex;
flex-direction: column;
align-items: center;
background-color: #ece9e3;
}
.hgrip{
display: block;
flex: none;
width: 18px;
height: 14px;
background-image: radial-gradient(circle at 1px 1px, #c5c2bb 0.8px, transparent 1px);
background-size: 3px 3px;
background-position: 0 4px;
background-repeat: repeat-x;
}
.hgrip-mid{
height: 18px;
background-position: 0 8px;
}
.lt{
width: 42px;
height: 27px;
flex: none;
display: flex;
align-items: center;
justify-content: center;
}
.lt-drop{ padding-left: 8px; box-sizing: border-box; }
.lt em{
width: 0;
height: 0;
margin-left: 4px;
border-left: 4px solid transparent;
border-right: 4px solid transparent;
border-top: 4px solid #aaa;
}
.lt-more{
font-size: 12px;
transform: rotate(90deg);
margin-top: 2px;
}
.canvas{
flex: 1;
position: relative;
background-color: #000;
background-image: radial-gradient(circle at 0.5px 0.5px, #9a9a9a 0.7px, transparent 1px);
background-size: 38px 38px;
background-position: 27px 14px;
}
.axis{
position: absolute;
left: 179px;
top: 0;
bottom: 0;
width: 1px;
background-color: #d8d8d8;
}
.cross{
position: absolute;
width: 3px;
height: 3px;
background: linear-gradient(#fff, #fff) center / 3px 1px no-repeat, linear-gradient(#fff, #fff) center / 1px 3px no-repeat;
}
.cross-a{ left: 786px; top: 203px; }
.cross-b{ left: 786px; top: 507px; }
.pin-t{
position: absolute;
left: 782px;
top: 327px;
width: 13px;
height: 1px;
background-color: #22a0f0;
}
.pin-v{
position: absolute;
left: 788px;
top: 327px;
width: 1px;
height: 19px;
background-color: #22a0f0;
}
.pin-h{
position: absolute;
left: 781px;
top: 356px;
width: 44px;
height: 1px;
background-color: #22a0f0;
}
.ed-status{
height: 35px;
flex: none;
background-color: #ece9e3;
display: flex;
align-items: center;
justify-content: flex-end;
padding: 1px 27px 0 0;
box-sizing: border-box;
}
.coords{ white-space: nowrap; font-size: 13px; }
.eye{
margin-left: 2px;
width: 26px;
height: 20px;
box-sizing: border-box;
border: 1px solid #c0bdb6;
border-radius: 3px;
background-color: #f6f4ef;
display: flex;
align-items: center;
justify-content: center;
}
.eye svg{ width: 18px; height: 13px; }
.term-ic{ width: 22px; height: 15px; margin-left: 7px; }
.st-drop{ margin: 0 0 0 6px; }

/* dialog */
.dialog{
position: absolute;
left: 254px;
top: 215px;
width: 628px;
height: 651px;
border-radius: 8px;
background-color: #eae7e1;
box-shadow: 0 6px 26px rgba(0,0,0,0.4);
overflow: hidden;
}
.dlg-title{
height: 30px;
box-sizing: border-box;
background-color: #eef3fa;
display: flex;
align-items: center;
padding: 0 9px 1px 8px;
}
.x-logo{ width: 17px; height: 17px; flex: none; }
.dlg-title-text{
margin-left: 5px;
font-family: "Noto Sans", sans-serif;
font-size: 11.45px;
color: #222;
}
.dlg-close{ width: 11px; height: 11px; margin-left: auto; }
.dlg-body{
padding: 20px 11px 0 12px;
}
.cv-row{
display: flex;
gap: 7px;
}
.group{
border: 1px solid #d1cec8;
border-radius: 2px;
box-sizing: border-box;
}
.legend{
width: fit-content;
height: 18px;
line-height: 18px;
margin: -10px 0 0 8px;
padding-right: 1px;
background-color: #eeebe5;
white-space: nowrap;
}
.cv-source{ width: 289px; height: 168px; }
.cv-dest{ width: 309px; height: 168px; }
.form{
display: grid;
grid-template-columns: 79px 1fr;
column-gap: 7px;
row-gap: 7px;
padding: 13px 11px 0 0;
align-items: center;
}
.form label{ text-align: right; letter-spacing: -0.3px; }
.combo{
height: 21px;
flex: 1;
box-sizing: border-box;
border: 1px solid #b5b2ab;
border-radius: 3px;
background-color: #fff;
display: flex;
align-items: center;
}
.cb-text{
flex: 1;
padding-left: 4px;
white-space: nowrap;
}
.cb-arrow{
width: 19px;
height: 19px;
flex: none;
box-sizing: border-box;
border-left: 1px solid #c4c1ba;
background: linear-gradient(to bottom, #f5f3ee, #e6e3dc);
border-radius: 0 2px 2px 0;
display: flex;
align-items: center;
justify-content: center;
}
.cb-arrow::after{
content: "";
border-left: 4px solid transparent;
border-right: 4px solid transparent;
border-top: 4px solid #666;
}
.combo-ro{
background: linear-gradient(to bottom, #fbfaf8, #e8e5df);
}
.combo-ro .cb-arrow{
border-left: 0;
background: none;
}
.combo-ro .cb-text{ padding-left: 5px; }
.combo-pair{
display: flex;
align-items: center;
height: 22px;
}
.fold-btn{
margin-left: 6px;
width: 23px;
height: 24px;
box-sizing: border-box;
border: 1px solid #c4c1ba;
border-radius: 3px;
background: linear-gradient(to bottom, #f5f3ee, #e6e3dc);
display: flex;
align-items: center;
justify-content: center;
flex: none;
}
.fold-drop{
margin-left: 1px;
width: 11px;
height: 24px;
box-sizing: border-box;
border: 1px solid #c4c1ba;
border-radius: 3px;
background: linear-gradient(to bottom, #f5f3ee, #e6e3dc);
display: flex;
align-items: center;
justify-content: center;
flex: none;
}
.fold-drop::after{
content: "";
border-left: 3px solid transparent;
border-right: 3px solid transparent;
border-top: 4px solid #555;
}
.check-row{
display: flex;
align-items: center;
gap: 6px;
margin-top: 6px;
}
.check{
width: 13px;
height: 13px;
box-sizing: border-box;
border: 1px solid #b5b2ab;
border-radius: 1px;
background-color: #fff;
display: flex;
flex: none;
}
.check svg{ width: 11px; height: 11px; }
.generator{
margin-top: 14px;
height: 378px;
}
.tri{
display: inline-block;
width: 0;
height: 0;
margin-right: 5px;
border-left: 6px solid transparent;
border-right: 6px solid transparent;
border-top: 7px solid #7aa0cc;
vertical-align: 1px;
}
.legend-tri{ background-color: #eae7e1; margin-left: 10px; margin-top: -9px; }
.option-row{
display: flex;
align-items: center;
padding: 13px 0 0 10px;
gap: 6px;
}
.option-label{ margin-right: 1px; }
.option-combo{
flex: none;
width: 72px;
height: 22px;
}
.option-combo .cb-arrow{ width: 16px; }
.btn{
width: 80px;
height: 22px;
box-sizing: border-box;
border: 1px solid #b5b2ab;
border-radius: 3px;
background: linear-gradient(to bottom, #f5f3ee, #ebe8e2);
text-align: center;
line-height: 19px;
flex: none;
}
.btn-off{ color: #8f8d88; }
.adjust{
margin: 14px 11px 0 11px;
height: 308px;
}
.pos-row{
display: flex;
align-items: center;
padding: 14px 0 0 10px;
height: 16px;
}
.pos-label{ width: 80px; flex: none; }
.radio{
width: 13px;
height: 13px;
box-sizing: border-box;
border: 1px solid #a8a6a0;
border-radius: 50%;
background-color: #fff;
flex: none;
margin-right: 6px;
}
.radio-on{ background: radial-gradient(circle, #333 3px, #fff 3.500px); }
.pos-opt{ margin-right: 8px; }
.uniq-row{
display: flex;
align-items: center;
gap: 6px;
margin: 11px 0 0 90px;
height: 16px;
}
.pin-cols{
display: flex;
margin: 10px 0 0 10px;
width: 558px;
height: 197px;
}
.pin-col{
flex: 1;
display: flex;
flex-direction: column;
}
.split{
display: block;
width: 4px;
flex: none;
background-image: radial-gradient(circle at 1px 1px, #a8a6a0 0.7px, transparent 1px);
background-size: 3px 3px;
background-position: 1px 50%;
background-repeat: repeat-x;
}
.pin-head{
height: 18px;
box-sizing: border-box;
border: 1px solid #c4c1ba;
background: linear-gradient(to bottom, #f0eee9, #e3e0da);
padding-left: 3px;
line-height: 18px;
}
.pin-list{
flex: 1;
background-color: #fff;
border-left: 1px solid #c4c1ba;
border-right: 1px solid #c4c1ba;
}
.pin-item{
height: 15px;
line-height: 19px;
padding-left: 2px;
}
.pin-sel{
background-color: #e8e6ee;
outline: 1px solid #b8b6c0;
outline-offset: -1px;
}
.hint{
margin: 5px 0 0 10px;
font-style: italic;
font-size: 12.6px;
height: 17px;
line-height: 17px;
}
.btn-row{
display: flex;
align-items: flex-start;
margin-top: 8px;
margin-left: -1px;
}
.btn-def{
margin-left: 6px;
width: 66px;
height: 23px;
border-radius: 3px 0 0 3px;
line-height: 21px;
}
.btn-defdrop{
width: 11px;
height: 23px;
margin-left: 1px;
box-sizing: border-box;
border: 1px solid #b5b2ab;
border-radius: 0 3px 3px 0;
display: flex;
align-items: center;
justify-content: center;
}
.btn-defdrop::after{
content: "";
border-left: 3px solid transparent;
border-right: 3px solid transparent;
border-top: 4px solid #555;
}
.btn-gap{ flex: 1; }
.btn-row .btn-ok{ border-color: #4a4458; margin-right: 6px; }
.btn-ok + .btn{ margin-right: 6px; }
```
